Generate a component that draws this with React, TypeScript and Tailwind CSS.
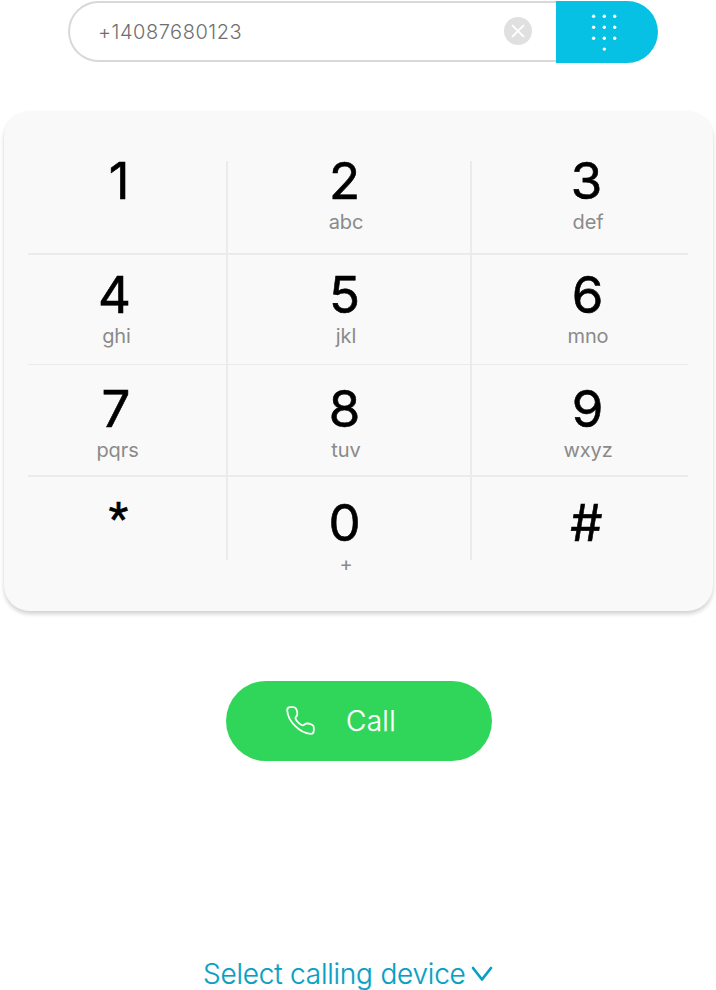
import React from "react";

type Key = { digit: string; letters: string; digitClass?: string; lettersClass?: string };
type Row = { rowClass: string; keys: Key[] };

const rows: Row[] = [
  {
    rowClass: "h-[94px] border-b-2",
    keys: [
      { digit: "1", letters: "", digitClass: "text-[51px] ml-[6px]" },
      { digit: "2", letters: "abc" },
      { digit: "3", letters: "def" },
    ],
  },
  {
    rowClass: "h-[110px] border-b pt-5",
    keys: [
      { digit: "4", letters: "ghi", digitClass: "text-[51px] mr-[3px]", lettersClass: "-translate-x-px" },
      { digit: "5", letters: "jkl" },
      { digit: "6", letters: "mno", digitClass: "text-[51px] ml-[2px]" },
    ],
  },
  {
    rowClass: "h-[112px] border-b-2 pt-6",
    keys: [
      { digit: "7", letters: "pqrs" },
      { digit: "8", letters: "tuv" },
      { digit: "9", letters: "wxyz", digitClass: "text-[51px] ml-[2px]" },
    ],
  },
  {
    rowClass: "h-[83px] border-b-0 pt-[26px]",
    keys: [
      { digit: "*", letters: "", digitClass: "text-[45px] ml-[5px] -translate-y-1 font-['Roboto',sans-serif]" },
      { digit: "0", letters: "+" },
      { digit: "#", letters: "" },
    ],
  },
];

const columnClasses = ["w-[176px]", "w-[281px]", "w-[203px]"];

function NumberField() {
  return (
    <div className="ml-[68px] flex h-[63px] w-[590px]">
      <div className="mt-px flex h-[61px] w-[488px] items-center rounded-l-full border-2 border-r-0 border-[#d8d8d8] bg-white pl-[28px] pr-6">
        <span className="flex-1 text-[20px] font-light leading-6 tracking-[0.52px] text-[#6f6f6f]">+14087680123</span>
        <svg className="-mt-0.5" width="28" height="28" viewBox="0 0 28 28" fill="none">
          <circle cx="14" cy="14" r="14" fill="#e0e0e0" />
          <path d="M8.6 8.6l10.8 10.8M19.4 8.6L8.6 19.4" stroke="#fff" strokeWidth="2" strokeLinecap="round" />
        </svg>
      </div>
      <div className="mt-[0.5px] h-[62px] w-[102px] rounded-r-full bg-[#07c1e4]">
        <svg width="102" height="62" viewBox="0 1 102 62" fill="#fff">
          {[16.2, 27.2, 38.2].map((y) =>
            [37.6, 48.3, 58.7].map((x) => <circle key={`${x}-${y}`} cx={x} cy={y} r="1.7" />)
          )}
          <circle cx="48.3" cy="49.1" r="1.7" />
        </svg>
      </div>
    </div>
  );
}

function Keypad() {
  return (
    <div className="ml-1 mt-12 h-[499.5px] w-[708.5px] rounded-[26px] bg-[#f9f9f9] pl-6 pt-[50px] shadow-[0_3px_4px_rgba(0,0,0,0.18)]">
      <div className="relative w-[660px]">
        {rows.map((row) => (
          <div key={row.keys[0].digit} className={`flex border-[#ebebeb] ${row.rowClass}`}>
            {row.keys.map((key, i) => (
              <div key={key.digit} className={`flex flex-col items-center ${columnClasses[i]}`}>
                <span
                  className={`pt-px font-normal leading-[38px] text-black [-webkit-text-stroke:0.6px_#000] ${key.digitClass ?? "text-[51px]"}`}
                >
                  {key.digit}
                </span>
                <span className={`ml-[3px] mt-[12px] text-[20px] leading-5 tracking-[-0.1px] text-[#8a8a8a] ${key.lettersClass ?? ""}`}>
                  {key.letters}
                </span>
              </div>
            ))}
          </div>
        ))}
        <div className="absolute left-[198px] top-0 h-[399px] w-[2px] bg-[#ebebeb]" />
        <div className="absolute left-[442px] top-0 h-[399px] w-[2px] bg-[#ebebeb]" />
      </div>
    </div>
  );
}

export default function App() {
  return (
    <div className="h-[990px] w-[716px] overflow-hidden bg-white font-['Inter',sans-serif]">
      <NumberField />
      <Keypad />
      <button className="ml-[226px] mt-[70px] flex h-20 w-[266px] items-center rounded-full bg-[#30d659] pl-[60px] text-white">
        <svg className="-mt-px" width="29" height="29" viewBox="0 0 29 29" fill="none" stroke="currentColor" strokeWidth="1.8" strokeLinejoin="round">
          <path d="M1.2 4.2C1.2 2 2.2 1.2 4.2 1.1H7.6C9 1.1 9.7 1.8 10.3 3.2C11.2 5.1 11.7 7.4 11.2 8.9C10.8 10.3 9.4 10.8 9.4 12.1C9.7 14.5 14.4 19.1 16.7 19.3C18 19.5 18.5 18.2 19.8 17.7C21.6 17.2 24.1 17.8 26 18.8C27.2 19.4 27.8 20.1 27.8 21.4V24.7C27.7 26.8 26.9 27.8 24.7 27.8C13.7 27.1 1.8 15.1 1.2 4.2Z" />
        </svg>
        <span className="ml-[31px] mt-px text-[28px] font-[330] leading-8 tracking-[0.3px] [-webkit-text-stroke:0.25px_currentColor]">Call</span>
      </button>
      <div className="ml-[203px] mt-[196px] flex h-[34px] items-center text-[#07a0c3]">
        <span className="whitespace-nowrap text-[28px] font-[330] leading-[34px] tracking-[-0.22px] [-webkit-text-stroke:0.2px_currentColor]">Select calling device</span>
        <svg className="ml-[5px]" width="22" height="16" viewBox="0 0 22 16" fill="none" stroke="currentColor" strokeWidth="2.7" strokeLinecap="round" strokeLinejoin="round">
          <path d="M2 2L11 13.5L20 2" />
        </svg>
      </div>
    </div>
  );
}
